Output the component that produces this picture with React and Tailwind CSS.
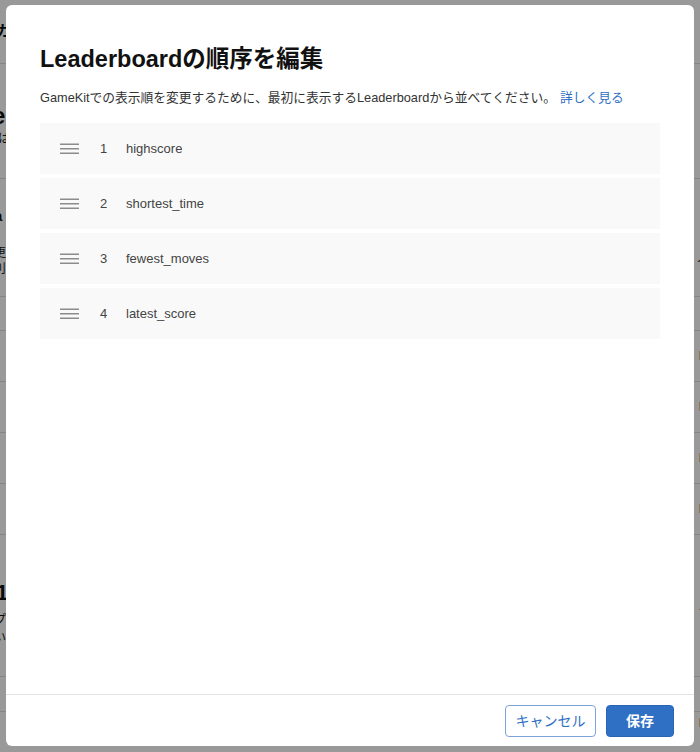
import React from "react";

const FONT = { fontFamily: '"Liberation Sans", "Noto Sans CJK JP", sans-serif' };

function Handle() {
  return (
    <svg width="19" height="12" viewBox="0 0 19 12" className="shrink-0">
      <rect x="0" y="0.5" width="19" height="1.5" fill="#8c8c8c" />
      <rect x="0" y="5" width="19" height="1.5" fill="#8c8c8c" />
      <rect x="0" y="9.5" width="19" height="1.5" fill="#8c8c8c" />
    </svg>
  );
}

const items = ["highscore", "shortest_time", "fewest_moves", "latest_score"];

export default function App() {
  return (
    <div className="relative w-[700px] h-[752px] overflow-hidden bg-white text-[#111]" style={FONT}>
      {/* background page */}
      <div className="flex flex-col w-full">
        <div className="h-[64px] border-b border-[#dcdcdc] flex items-center justify-between">
          <span className="ml-[-4px] text-[15px] font-bold">ガイド</span>
        </div>
        <div className="h-[115px] border-b border-[#dcdcdc] flex flex-col justify-end pb-[30px]">
          <span className="ml-[-8px] text-[24px] font-bold leading-[28px]">e</span>
          <span className="ml-[-2px] text-[12px] leading-[18px]">は</span>
        </div>
        <div className="h-[118px] border-b border-[#dcdcdc] flex justify-between pt-[26px]">
          <div className="flex flex-col">
            <span className="ml-[-6px] text-[15px] font-bold leading-[22px]">a</span>
            <span className="ml-[-6px] mt-[18px] text-[12px] leading-[16px]">更</span>
            <span className="ml-[-6px] text-[12px] leading-[16px]">刂</span>
          </div>
          <span className="mt-[44px] mr-[-8px] text-[12px]">ノ</span>
        </div>
        <div className="h-[34px] border-b border-[#dcdcdc]" />
        {[0, 1, 2, 3].map((i) => (
          <div key={i} className="h-[51px] border-b border-[#dcdcdc] flex items-center justify-end">
            <span className="mr-[-3px] w-[4px] text-[12px] text-[#111]">l</span>
          </div>
        ))}
        <div className="h-[142px] border-b border-[#dcdcdc] flex justify-between pt-[44px]">
          <div className="flex flex-col">
            <span className="ml-[-4px] text-[22px] font-bold leading-[28px]">1</span>
            <span className="ml-[-6px] mt-[4px] text-[12px] leading-[18px]">プ</span>
            <span className="ml-[-6px] text-[12px] leading-[18px]">い</span>
          </div>
          <span className="mt-[26px] mr-[-6px] w-[8px] text-[12px]">フ</span>
        </div>
        <div className="h-[35px] border-b border-[#dcdcdc]" />
        <div className="h-[40px] flex items-start justify-end pt-[2px]">
          <span className="mr-[-3px] w-[4px] text-[12px]">l</span>
        </div>
      </div>

      {/* overlay */}
      <div className="absolute inset-0 bg-black/40" />

      {/* modal */}
      <div className="absolute left-[6px] top-[5px] w-[688px] h-[741px] bg-white rounded-[6px] flex flex-col">
        <div className="flex-1 px-[34px] pt-[38px]">
          <h1 className="text-[23.5px] font-bold leading-[32px] text-[#111]">Leaderboardの順序を編集</h1>
          <p className="mt-[13px] text-[12.75px] leading-[20px] text-[#333]">
            GameKitでの表示順を変更するために、最初に表示するLeaderboardから並べてください。<span className="ml-[4px] text-[#2f6fc4]">詳しく見る</span>
          </p>
          <div className="mt-[15px] flex flex-col gap-[4px]">
            {items.map((t, i) => (
              <div key={t} className="h-[51px] bg-[#f9f9f9] flex items-center pl-[20px]">
                <Handle />
                <span className="ml-[21px] text-[13px] text-[#444] w-[8px]">{i + 1}</span>
                <span className="ml-[18px] text-[13px] text-[#444]">{t}</span>
              </div>
            ))}
          </div>
        </div>
        <div className="border-t border-[#e3e3e3] h-[52px] flex items-center justify-end gap-[10px] pr-[20px] pt-[1px]">
          <button className="h-[32px] w-[91px] rounded-[4px] border border-[#7ea3d8] bg-white text-[14px] text-[#2f6fc4]">
            キャンセル
          </button>
          <button className="h-[32px] w-[68px] rounded-[4px] border border-[#2a63b3] bg-[#2f6fc4] text-[14px] font-bold text-white">
            保存
          </button>
        </div>
      </div>
    </div>
  );
}
